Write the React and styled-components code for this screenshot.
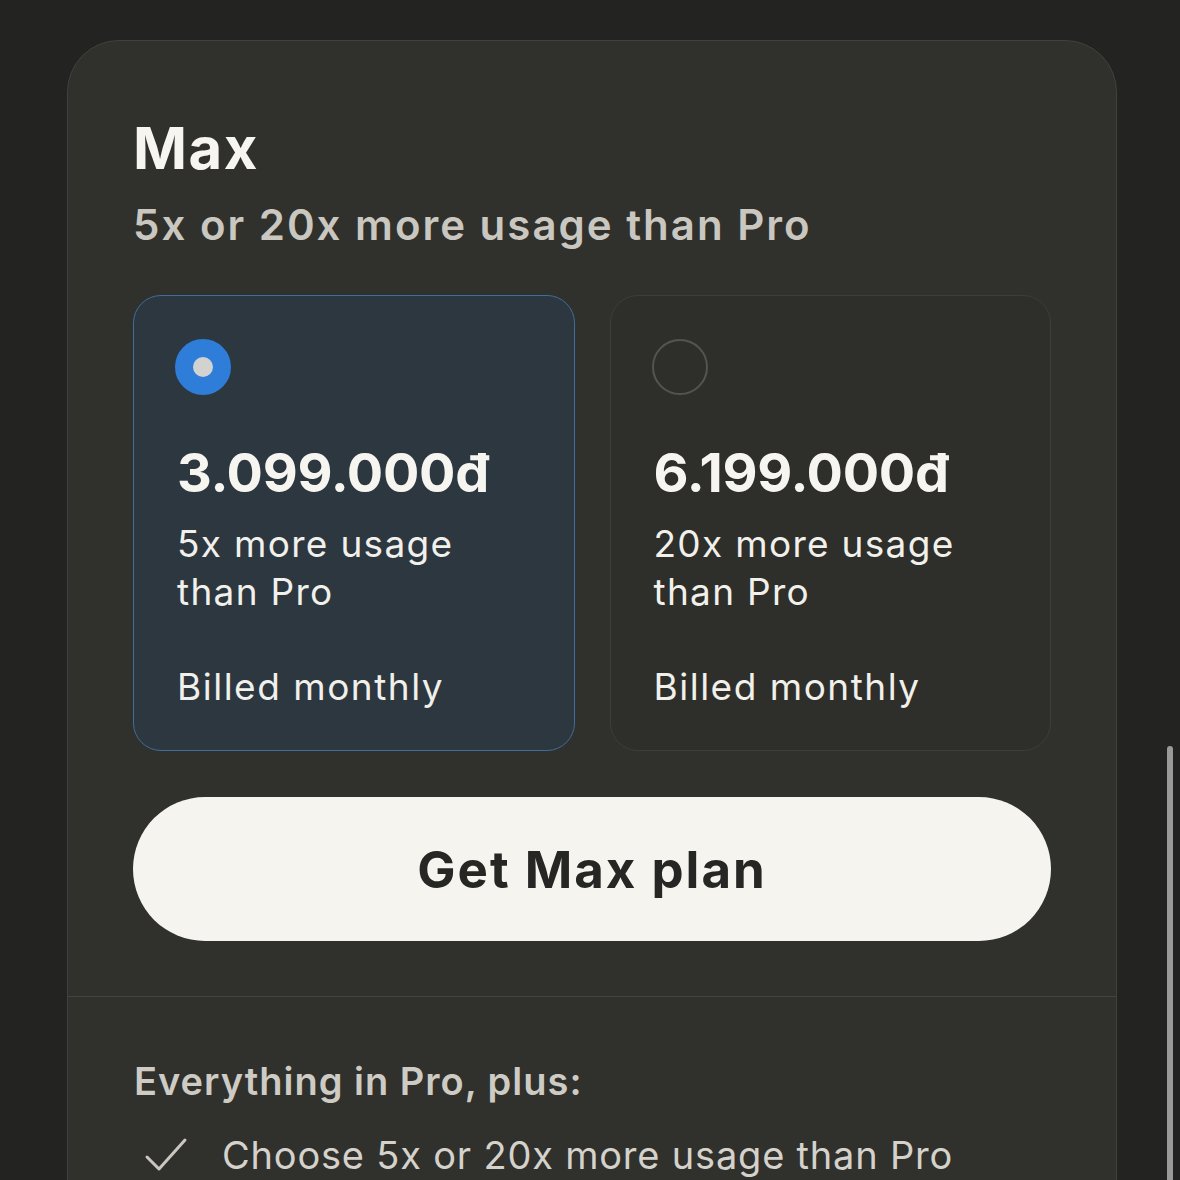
import { useState } from "react";
import styled, { createGlobalStyle } from "styled-components";

const GlobalStyle = createGlobalStyle`
  html, body {
    margin: 0;
    padding: 0;
    background: #232322;
    height: 1180px;
    overflow: hidden;
  }
  body {
    font-family: Inter, "Noto Sans", sans-serif;
    color: #f4f3ee;
  }
`;

const plans = [
  { id: "5x", price: "3.099.000đ", usage: "5x more usage than Pro", billing: "Billed monthly" },
  { id: "20x", price: "6.199.000đ", usage: "20x more usage than Pro", billing: "Billed monthly" },
];

const App = () => {
  const [selected, setSelected] = useState("5x");

  return (
    <>
      <GlobalStyle />
      <Page>
        <Card>
          <TopSection>
            <Title>Max</Title>
            <Subtitle>5x or 20x more usage than Pro</Subtitle>
            <Options>
              {plans.map((plan) => (
                <Option
                  key={plan.id}
                  $selected={selected === plan.id}
                  onClick={() => setSelected(plan.id)}
                >
                  <Radio $selected={selected === plan.id} />
                  <Price>{plan.price}</Price>
                  <Usage>{plan.usage}</Usage>
                  <Billing>{plan.billing}</Billing>
                </Option>
              ))}
            </Options>
            <CtaButton>Get Max plan</CtaButton>
          </TopSection>
          <Features>
            <FeatureHeading>Everything in Pro, plus:</FeatureHeading>
            <FeatureItem>
              <svg width="44" height="36" viewBox="0 0 44 36" fill="none">
                <polyline
                  points="3,20 15,32 41,3"
                  stroke="#c9c7bf"
                  strokeWidth="3"
                  strokeLinecap="round"
                  strokeLinejoin="round"
                />
              </svg>
              <span>Choose 5x or 20x more usage than Pro</span>
            </FeatureItem>
          </Features>
        </Card>
        <ScrollThumb />
      </Page>
    </>
  );
};
export default App;

const Page = styled.div`
  position: relative;
  height: 1180px;
  padding: 40px 63px 0 67px;
  box-sizing: border-box;
`;

const Card = styled.div`
  width: 1050px;
  height: 1200px;
  box-sizing: border-box;
  background: #30302d;
  border: 1px solid #41413d;
  border-radius: 52px;
`;

const TopSection = styled.div`
  padding: 72px 65px 55px 65px;
  border-bottom: 1.5px solid #42423e;
`;

const Title = styled.h1`
  margin: 0;
  font-size: 58px;
  line-height: 70px;
  font-weight: 700;
  color: #f6f5f0;
  letter-spacing: 1.5px;
`;

const Subtitle = styled.p`
  margin: 16px 0 0;
  font-size: 42px;
  line-height: 52px;
  font-weight: 600;
  color: #c9c7bf;
  letter-spacing: 2px;
`;

const Options = styled.div`
  display: grid;
  grid-template-columns: 1fr 1fr;
  gap: 35px;
  margin-top: 44px;
`;

const Option = styled.div`
  height: 456px;
  box-sizing: border-box;
  padding: 43px 43px 0;
  border-radius: 28px;
  border: 1.5px solid ${({ $selected }) => ($selected ? "#3f6e9c" : "#3d3d39")};
  background: ${({ $selected }) => ($selected ? "#2c3740" : "#2e2e2b")};
  cursor: pointer;
`;

const Radio = styled.div`
  width: 56px;
  height: 56px;
  margin-left: -2px;
  box-sizing: border-box;
  border-radius: 50%;
  border: ${({ $selected }) => ($selected ? "18px solid #2e7dd8" : "2px solid #55554f")};
  background: ${({ $selected }) => ($selected ? "#d2d2d0" : "transparent")};
`;

const Price = styled.div`
  margin-top: 46px;
  font-size: 54px;
  line-height: 64px;
  font-weight: 700;
  color: #f6f5f0;
  letter-spacing: -0.3px;
`;

const Usage = styled.div`
  margin-top: 15px;
  width: 320px;
  font-size: 37px;
  line-height: 48px;
  font-weight: 400;
  color: #f1f0ea;
  letter-spacing: 1.3px;
`;

const Billing = styled.div`
  margin-top: 47px;
  font-size: 37px;
  line-height: 48px;
  color: #f1f0ea;
  letter-spacing: 1.5px;
`;

const CtaButton = styled.button`
  display: block;
  width: 100%;
  height: 144px;
  margin-top: 46px;
  border: none;
  border-radius: 72px;
  background: #f5f4ee;
  color: #262624;
  font-family: inherit;
  font-size: 51px;
  font-weight: 700;
  letter-spacing: 2px;
  cursor: pointer;
`;

const Features = styled.div`
  padding: 60px 66px 0 66px;
`;

const FeatureHeading = styled.div`
  font-size: 38px;
  line-height: 48px;
  font-weight: 600;
  color: #cdcbc3;
  letter-spacing: 1px;
`;

const FeatureItem = styled.div`
  display: flex;
  align-items: center;
  gap: 34px;
  margin-top: 26px;
  padding-left: 10px;
  font-size: 38px;
  line-height: 48px;
  color: #d4d2ca;
  letter-spacing: 0.8px;

  svg {
    flex-shrink: 0;
  }
`;

const ScrollThumb = styled.div`
  position: absolute;
  right: 7px;
  top: 746px;
  width: 6px;
  height: 460px;
  border-radius: 3px;
  background: #9a9a98;
`;
